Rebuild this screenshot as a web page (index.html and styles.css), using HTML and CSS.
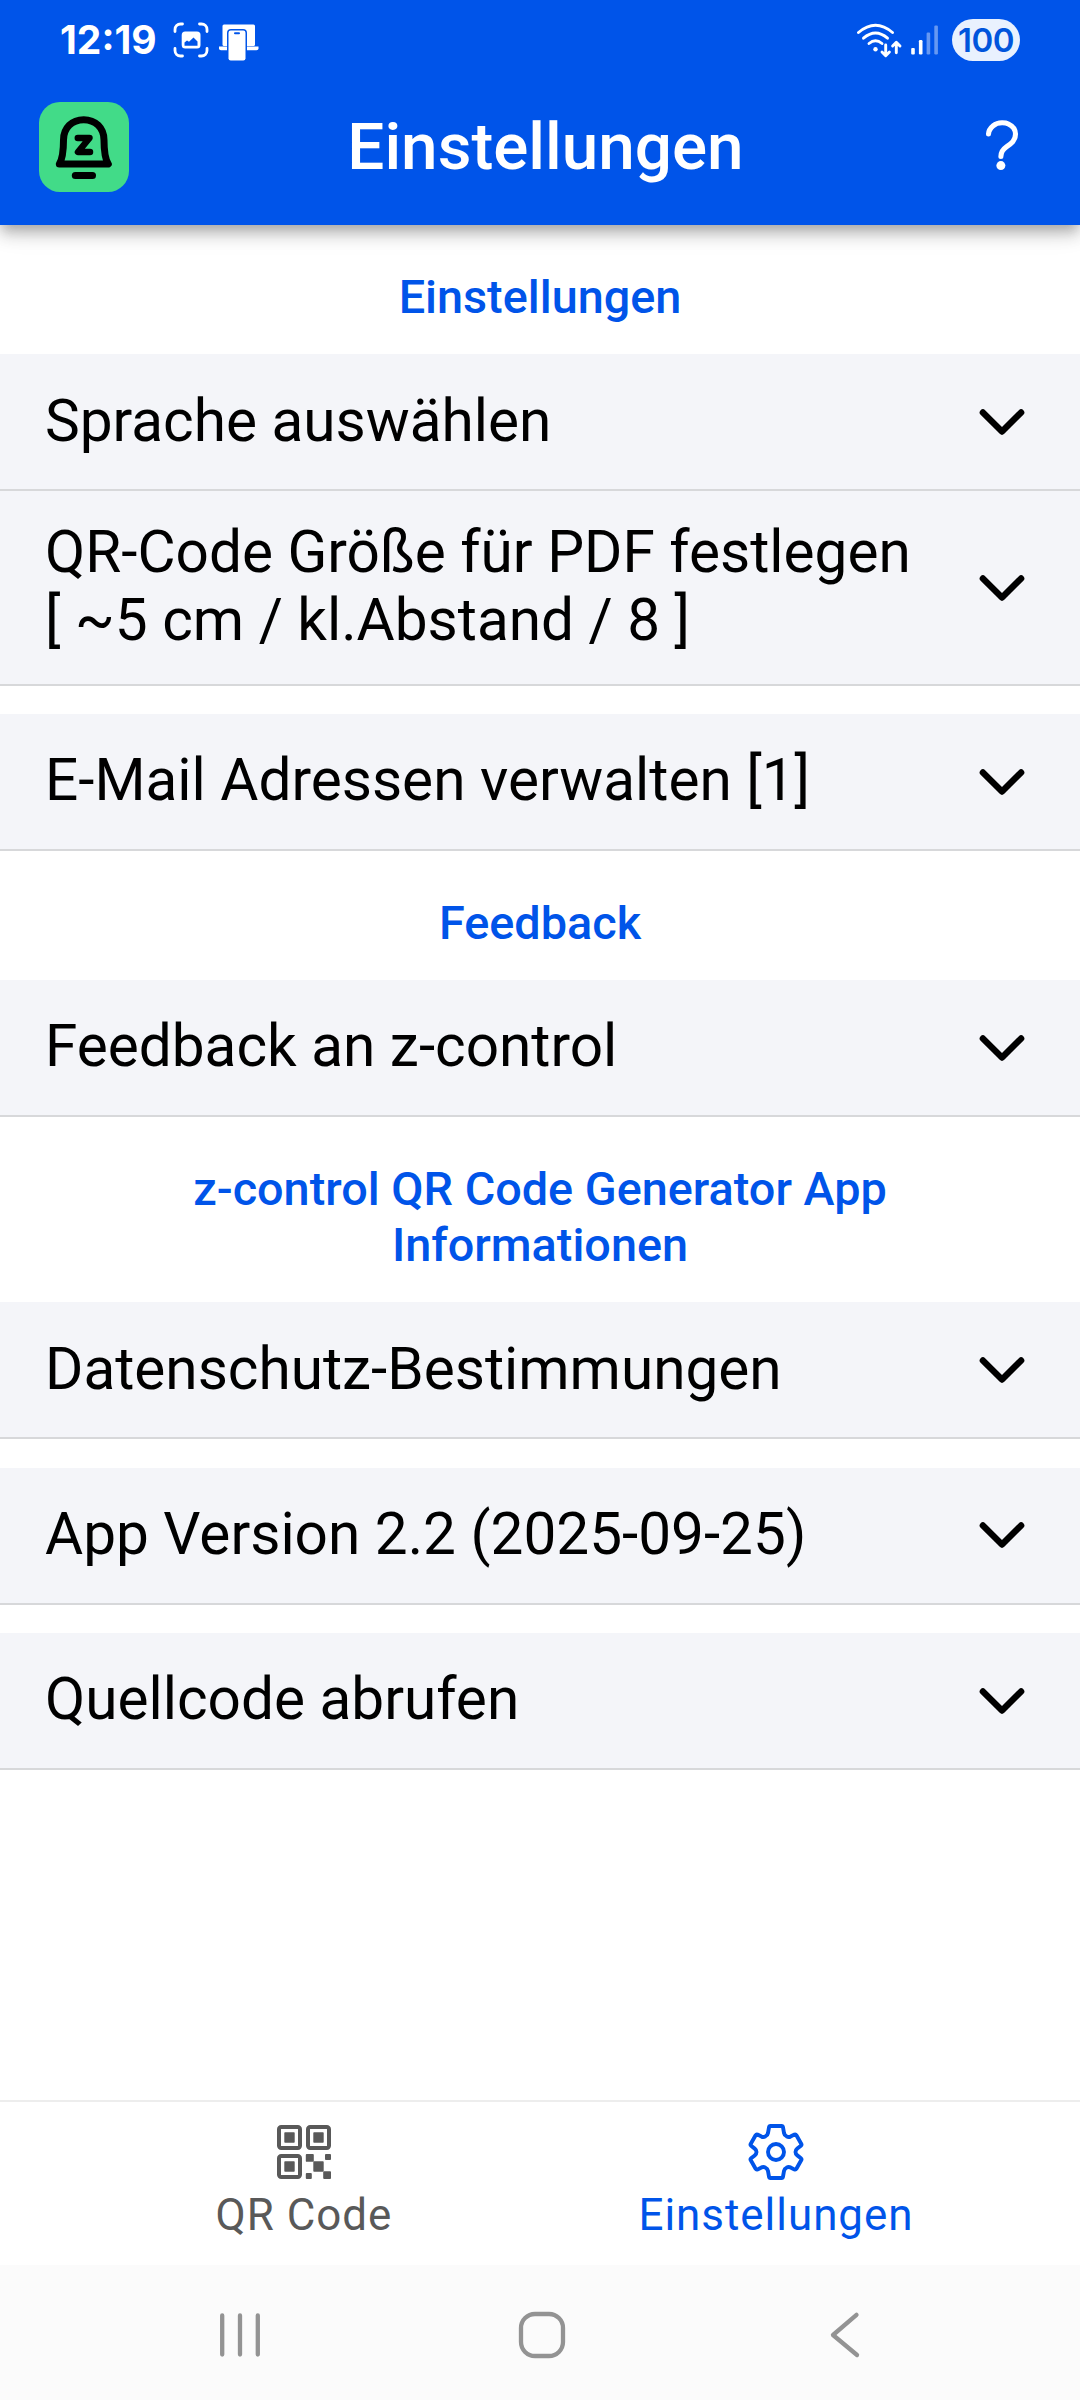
FILE: index.html
```html
<!DOCTYPE html>
<html lang="de">
<head>
<meta charset="utf-8">
<title>Einstellungen</title>
<link rel="stylesheet" href="styles.css">
</head>
<body>
<svg class="defs" width="0" height="0" aria-hidden="true">
  <symbol id="chevron-down" viewBox="0 0 512 512">
    <path d="M112 184l144 144 144-144" fill="none" stroke="currentColor" stroke-width="48" stroke-linecap="round" stroke-linejoin="round"/>
  </symbol>
</svg>

<header class="header">
  <div class="status-bar">
    <span class="clock">12:19</span>
    <svg class="icon-capture" width="36" height="36" viewBox="0 0 36 36">
      <g fill="none" stroke="#fff" stroke-width="2.8" stroke-linecap="round">
        <path d="M2 9.5V7.5A5.5 5.5 0 0 1 7.5 2H9.500M26.500 2H28.500A5.500 5.500 0 0 1 34 7.500V9.500M34 26.500V28.500A5.500 5.500 0 0 1 28.500 34H26.500M9.500 34H7.500A5.500 5.500 0 0 1 2 28.500V26.500"/>
      </g>
      <rect x="8.700" y="9.500" width="18.800" height="17" rx="3.500" fill="#fff"/>
      <path d="M11.500 23.700V20.500L14 18.500L16 19.700L20.500 15.500L24.500 19.500V23.700Z" fill="#0054e9"/>
    </svg>
    <svg class="icon-devices" width="40" height="38" viewBox="0 0 40 38">
      <rect x="3.500" y="1.500" width="32.500" height="21.500" rx="1.500" fill="#fff"/>
      <path d="M0 23.600H39.500V25.500Q39.500 27.300 37.500 27.300H2Q0 27.300 0 25.500Z" fill="#fff"/>
      <path d="M8 38V10Q8 6 12 6H24Q28 6 28 10V38Z" fill="#0054e9"/>
      <rect x="9.500" y="7.500" width="17" height="30" rx="2.200" fill="#fff"/>
      <rect x="15" y="9.200" width="6" height="2" rx="1" fill="#0054e9"/>
    </svg>
    <svg class="icon-signal" width="84" height="40" viewBox="0 0 84 40">
      <g fill="none" stroke="#fff" stroke-width="2.900" stroke-linecap="round" stroke-linejoin="round">
        <path d="M2.500 12.500Q19.500-2 36.500 12.500"/>
        <path d="M7.500 18.200Q19.500 8 31.500 18.200"/>
        <path d="M13 23.500Q19.500 18 26 23.500"/>
        <path d="M29.700 25V35.500M26 32L29.700 35.700L33.400 32"/>
        <path d="M40.300 32.700V23M36.600 26L40.300 22.300L44 26"/>
      </g>
      <circle cx="19.500" cy="29.300" r="2.200" fill="#fff"/>
      <g fill="#fff">
        <rect x="55.200" y="28" width="3.600" height="6.500" rx="1"/>
        <rect x="62.900" y="20" width="3.600" height="14.500" rx="1.200"/>
        <rect x="70.600" y="12.500" width="3.600" height="22" rx="1.200" opacity=".4"/>
        <rect x="78.300" y="5.500" width="3.600" height="29" rx="1.200" opacity=".4"/>
      </g>
    </svg>
    <span class="battery">100</span>
  </div>
  <div class="toolbar">
    <svg class="logo" width="90" height="90" viewBox="0 0 90 90">
      <g fill="none" stroke="#000" stroke-linecap="round" stroke-linejoin="round">
        <path stroke-width="7" d="M20.300 62C24 56 24.500 47 24.500 38C24.500 26 33 17.700 44.700 17.700S65 26 65 38C65 47 65.500 56 69.300 62Z"/>
        <path stroke-width="7" d="M36.300 73.400H53.500"/>
        <path stroke-width="6.500" d="M38.800 36H50.500L39 50H51"/>
      </g>
    </svg>
    <h1 class="title">Einstellungen</h1>
    <svg class="help" width="72" height="72" viewBox="0 0 512 512">
      <path d="M160 164s1.440-33 33.540-59.460C212.600 88.830 235.490 84.280 256 84c18.730-.23 35.470 2.940 45.480 7.820C318.590 100.200 352 120.600 352 164c0 45.670-29.180 66.370-62.350 89.180S248 298.360 248 324" fill="none" stroke="#fff" stroke-width="36" stroke-linecap="round" stroke-linejoin="round"/>
      <circle cx="248" cy="388" r="32" fill="#fff"/>
    </svg>
  </div>
</header>

<main class="content">
  <h2 class="section">Einstellungen</h2>
  <div class="row lead"><span class="label">Sprache auswählen</span><svg class="chevron"><use href="#chevron-down"/></svg></div>
  <div class="row"><span class="label">QR-Code Größe für PDF festlegen<br>[ ~5 cm / kl.Abstand / 8 ]</span><svg class="chevron"><use href="#chevron-down"/></svg></div>
  <div class="row spaced"><span class="label">E-Mail Adressen verwalten [1]</span><svg class="chevron"><use href="#chevron-down"/></svg></div>

  <h2 class="section">Feedback</h2>
  <div class="row"><span class="label">Feedback an z-control</span><svg class="chevron"><use href="#chevron-down"/></svg></div>

  <h2 class="section">z-control QR Code Generator App<br>Informationen</h2>
  <div class="row lead"><span class="label">Datenschutz-Bestimmungen</span><svg class="chevron"><use href="#chevron-down"/></svg></div>
  <div class="row spaced"><span class="label">App Version 2.2 (2025-09-25)</span><svg class="chevron"><use href="#chevron-down"/></svg></div>
  <div class="row spaced"><span class="label">Quellcode abrufen</span><svg class="chevron"><use href="#chevron-down"/></svg></div>
</main>

<nav class="tabs">
  <a class="tab">
    <svg width="56" height="56" viewBox="0 0 56 56">
      <g fill="none" stroke="currentColor" stroke-width="4">
        <rect x="3" y="3" width="21" height="21" rx="2.200"/>
        <rect x="32" y="3" width="21" height="21" rx="2.200"/>
        <rect x="3" y="32" width="21" height="21" rx="2.200"/>
      </g>
      <g fill="currentColor">
        <rect x="8.300" y="8.300" width="10.400" height="10.400" rx=".7"/>
        <rect x="37.300" y="8.300" width="10.400" height="10.400" rx=".7"/>
        <rect x="8.300" y="37.300" width="10.400" height="10.400" rx=".7"/>
        <rect x="37.300" y="37.300" width="10.400" height="10.400" rx=".7"/>
        <rect x="29.800" y="30" width="8" height="7.800" rx=".9"/>
        <rect x="49" y="30" width="6" height="6" rx=".9"/>
        <rect x="29.800" y="49" width="6" height="6" rx=".9"/>
        <rect x="47.200" y="47.200" width="7.800" height="7.800" rx=".9"/>
      </g>
    </svg>
    <span>QR Code</span>
  </a>
  <a class="tab active">
    <svg width="56" height="56" viewBox="0 0 56 56">
      <g fill="none" stroke="currentColor" stroke-width="3.900" stroke-linejoin="round">
        <circle cx="28" cy="28" r="8"/>
        <path d="M22.500 2H33.500Q34.800 2 35 3.300L36 9Q36.500 11.500 38.500 12.300Q40.500 13.500 42.500 12.600L46.500 10.600Q47.700 10.200 48.400 11.300L53.200 19.700Q53.900 20.900 52.900 21.700L49.300 24.600Q47.500 26 47.500 28Q47.500 30 49.300 31.400L52.900 34.300Q53.900 35.100 53.200 36.300L48.400 44.700Q47.700 45.800 46.500 45.400L42.500 43.400Q40.500 42.500 38.500 43.700Q36.500 44.500 36 47L35 52.700Q34.800 54 33.500 54H22.500Q21.200 54 21 52.700L20 47Q19.500 44.500 17.500 43.700Q15.500 42.500 13.500 43.400L9.500 45.400Q8.300 45.800 7.600 44.700L2.800 36.300Q2.100 35.100 3.100 34.300L6.700 31.400Q8.500 30 8.500 28Q8.500 26 6.700 24.600L3.100 21.700Q2.100 20.900 2.800 19.700L7.600 11.300Q8.300 10.200 9.500 10.600L13.500 12.600Q15.500 13.500 17.500 12.300Q19.500 11.500 20 9L21 3.300Q21.200 2 22.500 2Z"/>
      </g>
    </svg>
    <span>Einstellungen</span>
  </a>
</nav>

<footer class="system-nav">
  <svg width="48" height="48" viewBox="0 0 48 48"><path d="M6.200 4.500V43.500M24 4.500V43.500M41.800 4.500V43.500"/></svg>
  <svg width="48" height="48" viewBox="0 0 48 48"><rect x="3" y="3" width="42" height="42" rx="14"/></svg>
  <svg width="48" height="48" viewBox="0 0 48 48"><path d="M36.500 3.800L13 24L37 44"/></svg>
</footer>
</body>
</html>
```
FILE: styles.css
```css
* {
  box-sizing: border-box;
}

body {
  margin: 0;
  width: 1080px;
  height: 2400px;
  display: flex;
  flex-direction: column;
  background: #fff;
  color: #000;
  font-family: Roboto, sans-serif;
  overflow: hidden;
}

.defs {
  display: none;
}

/* Header */
.header {
  height: 225px;
  flex: none;
  background: #0054e9;
  color: #fff;
  box-shadow:
    0 5.6px 11px -2.8px rgba(0, 0, 0, .2),
    0 11px 14px 0 rgba(0, 0, 0, .14),
    0 2.8px 28px 0 rgba(0, 0, 0, .12);
}

.status-bar {
  display: flex;
  align-items: center;
  height: 69px;
  padding: 11px 60px 0 60px;
  font-family: Inter, sans-serif;
}

.clock {
  width: 113px;
  font-size: 39px;
  font-weight: 700;
  line-height: 48px;
}

.icon-capture {
  flex: none;
}

.icon-devices {
  flex: none;
  margin: 4px 0 0 10px;
}

.icon-signal {
  flex: none;
  margin-left: auto;
  margin-right: 12px;
}

.battery {
  width: 68px;
  height: 42px;
  border-radius: 21px;
  background: #e9f1fe;
  color: #0055dc;
  font-size: 33px;
  font-weight: 600;
  line-height: 42px;
  letter-spacing: -.5px;
  text-align: center;
}

.toolbar {
  display: flex;
  align-items: center;
  height: 156px;
  padding: 0 42px 0 39px;
}

.logo {
  flex: none;
  border-radius: 21px;
  background: #42db88;
}

.logo g {
  filter: blur(.7px);
}

.title {
  flex: 1;
  margin: 0 4px 0 0;
  font-size: 65.6px;
  font-weight: 500;
  line-height: 78px;
  text-align: center;
}

.help {
  flex: none;
}

/* Settings list */
.content {
  flex: 1;
}

.section {
  margin: 0;
  padding: 44px 45px 29px;
  color: #0054e9;
  font-size: 46.8px;
  font-weight: 500;
  line-height: 56px;
  text-align: center;
}

.row {
  display: flex;
  align-items: center;
  justify-content: space-between;
  min-height: 137px;
  padding: 0 44.5px 0 45px;
  border-bottom: 2px solid #d7d8da;
  background: #f4f5f9;
}

.row.spaced {
  margin-top: 28.4px;
}

.label {
  padding: 27px 0 30px;
  font-size: 58.5px;
  line-height: 68px;
}

.row.lead .label {
  padding: 28px 0 29px;
}

.chevron {
  flex: none;
  width: 68px;
  height: 68px;
}

/* Tab bar */
.tabs {
  display: flex;
  justify-content: center;
  flex: none;
  height: 165px;
  border-top: 2px solid #ededed;
}

.tab {
  display: flex;
  flex-direction: column;
  align-items: center;
  width: 472px;
  padding-top: 22px;
  color: #595959;
  font-size: 43.9px;
  letter-spacing: 1px;
  line-height: 52px;
}

.tab span {
  margin-top: 9px;
}

.tab.active {
  color: #0054e9;
}

/* System navigation */
.system-nav {
  display: flex;
  align-items: center;
  justify-content: space-between;
  flex: none;
  height: 135px;
  padding: 5px 212px 0 216px;
  background: #fbfbfb;
}

.system-nav svg {
  fill: none;
  stroke: #939393;
  stroke-width: 4.3;
  stroke-linecap: round;
  stroke-linejoin: round;
}
```
